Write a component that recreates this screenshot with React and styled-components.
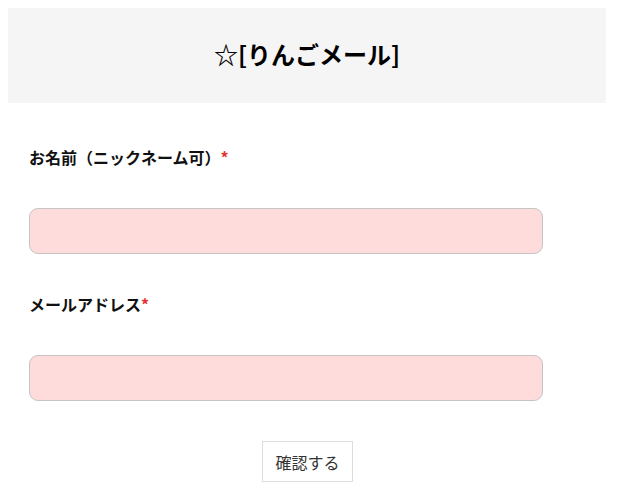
import React from "react";
import styled, { createGlobalStyle } from "styled-components";

const Global = createGlobalStyle`
  body {
    margin: 8px;
    background: #fff;
    font-family: "Noto Sans CJK JP", "Noto Sans", sans-serif;
    color: #111;
  }
`;

const Page = styled.div`
  width: 598px;
`;

const Header = styled.header`
  box-sizing: border-box;
  height: 95px;
  padding-bottom: 4px;
  background: #f5f5f5;
  display: flex;
  align-items: center;
  justify-content: center;
`;

const Title = styled.h1`
  margin: 0;
  font-size: 24px;
  font-weight: 700;
  line-height: 1;
  color: #000;
`;

const Form = styled.form`
  display: flex;
  flex-direction: column;
  padding: 42px 0 0 21px;
`;

const Field = styled.div`
  display: flex;
  flex-direction: column;
  gap: 39px;
  margin-bottom: 38px;
`;

const Label = styled.label`
  font-size: 16px;
  font-weight: 700;
  line-height: 24px;
  color: #111;
`;

const Required = styled.span`
  color: #e8322f;
  font-weight: 700;
`;

const Input = styled.input`
  box-sizing: border-box;
  width: 514px;
  height: 46px;
  background: #ffdcdc;
  border: 1px solid #c6c3c3;
  border-radius: 9px;
  outline: none;
  padding: 0 12px;
  font-size: 16px;
  font-family: inherit;
`;

const Actions = styled.div`
  display: flex;
  justify-content: center;
  width: 557px;
  margin-top: 2px;
`;

const Button = styled.button`
  box-sizing: border-box;
  height: 41px;
  padding: 0 12px;
  background: #fff;
  border: 1px solid #dcdcdc;
  font-family: "Noto Sans CJK JP", sans-serif;
  font-size: 16px;
  color: #333;
`;

export default function App() {
  return (
    <Page>
      <Global />
      <Header>
        <Title>☆[りんごメール]</Title>
      </Header>
      <Form onSubmit={(e) => e.preventDefault()}>
        <Field>
          <Label>
            お名前（ニックネーム可）<Required>*</Required>
          </Label>
          <Input type="text" />
        </Field>
        <Field>
          <Label>
            メールアドレス<Required>*</Required>
          </Label>
          <Input type="email" />
        </Field>
        <Actions>
          <Button type="submit">確認する</Button>
        </Actions>
      </Form>
    </Page>
  );
}
